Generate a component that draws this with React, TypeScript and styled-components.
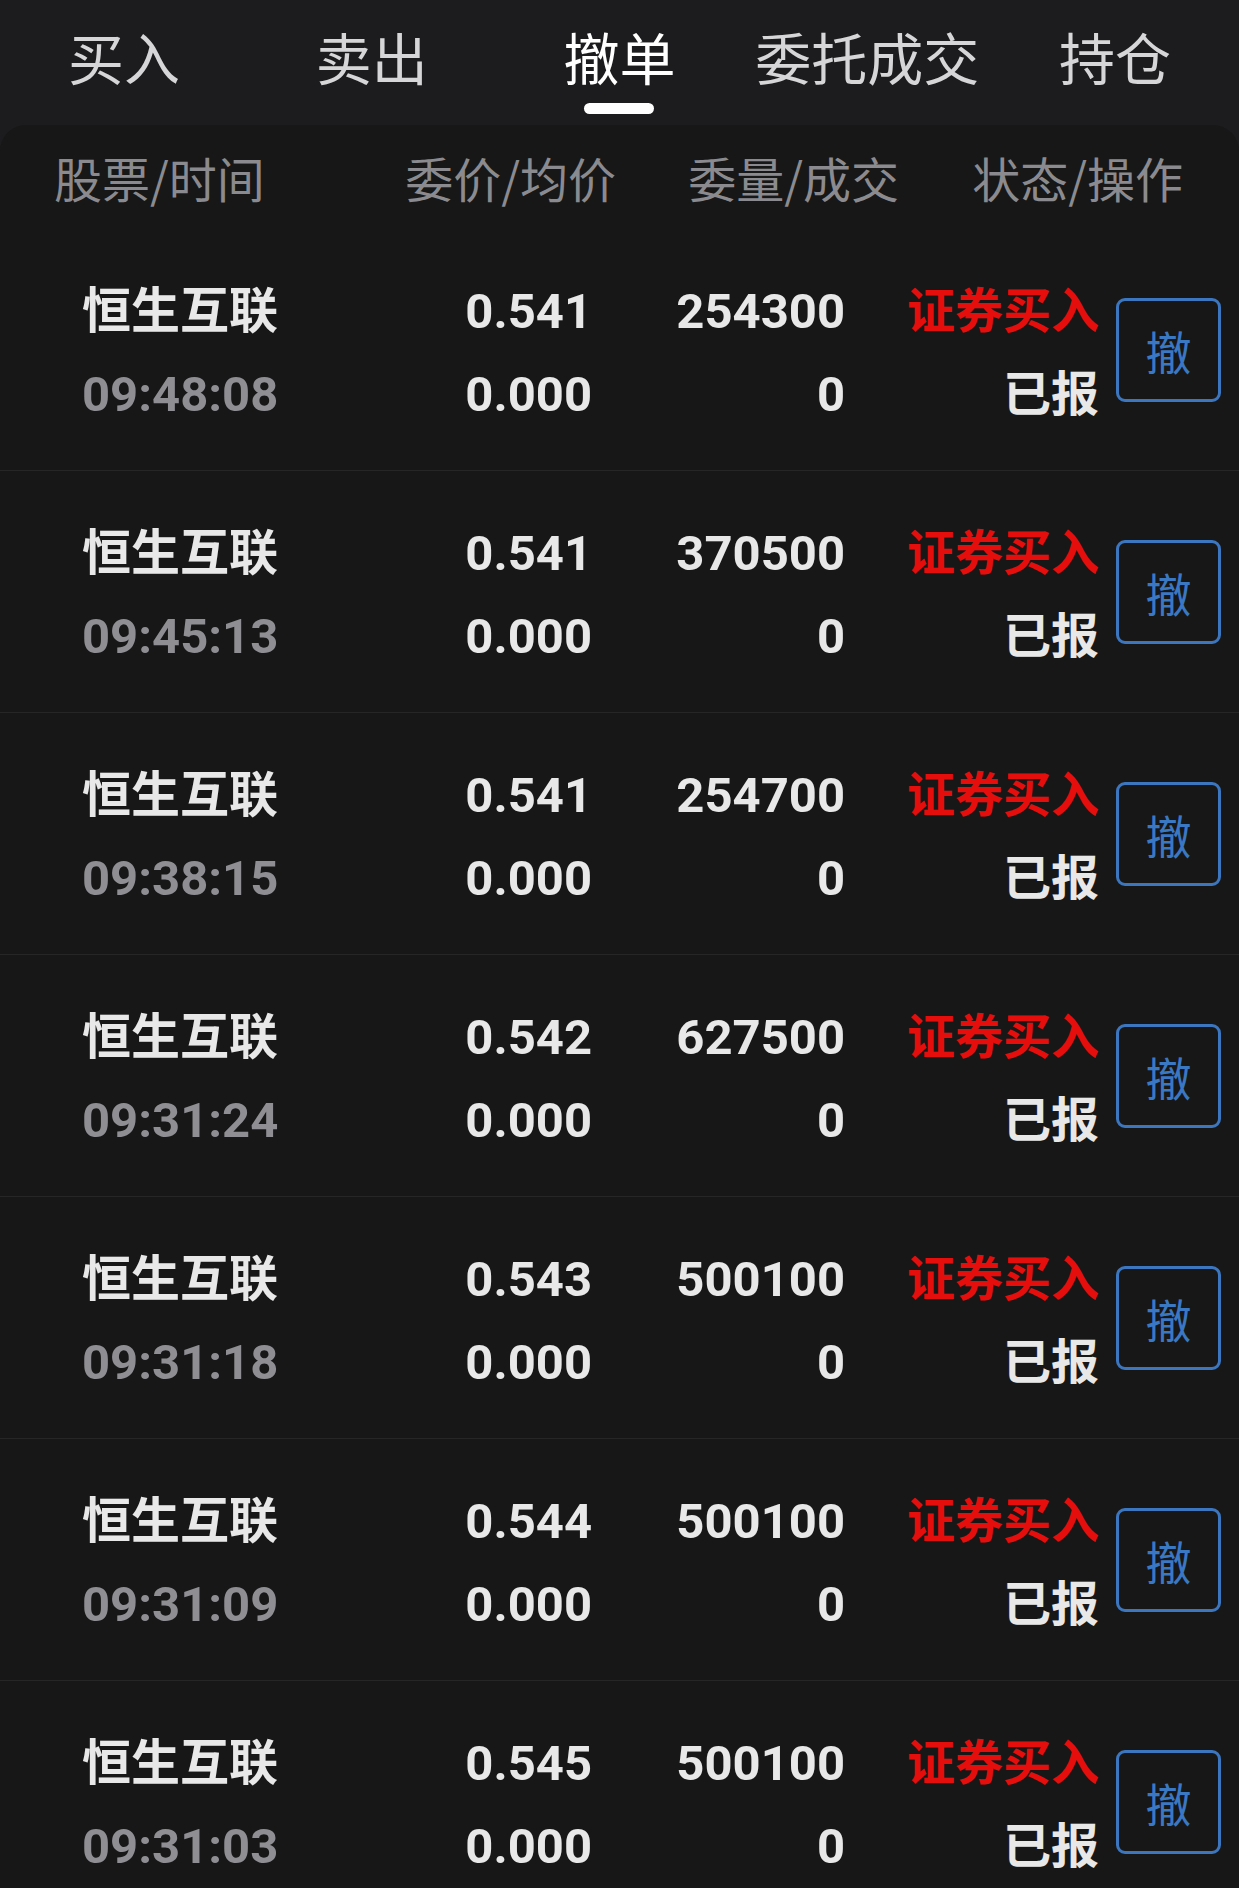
import React from "react";
import styled, { createGlobalStyle } from "styled-components";

const GlobalStyle = createGlobalStyle`
  html, body {
    margin: 0;
    padding: 0;
    background: #171717;
  }
  * { box-sizing: border-box; }
`;

const FONT = `Roboto, "Noto Sans CJK SC", "Noto Sans", sans-serif`;

const Page = styled.div`
  width: 1239px;
  height: 1888px;
  overflow: hidden;
  background: #1c1c1e;
  font-family: ${FONT};
  display: flex;
  flex-direction: column;
`;

const TabBar = styled.nav`
  height: 125px;
  flex: none;
  display: grid;
  grid-template-columns: repeat(5, 1fr);
`;

const Tab = styled.div`
  display: flex;
  flex-direction: column;
  align-items: center;
  padding-top: 26px;
`;

const TabLabel = styled.span<{ $active?: boolean }>`
  font-family: "Noto Sans CJK SC", sans-serif;
  font-size: 56px;
  line-height: 60px;
  font-weight: 400;
  color: ${(p) => (p.$active ? "#ffffff" : "#d6d6d8")};
  white-space: nowrap;
`;

const Indicator = styled.span<{ $active?: boolean }>`
  margin-top: 17px;
  width: 70px;
  height: 11px;
  border-radius: 6px;
  background: ${(p) => (p.$active ? "#ffffff" : "transparent")};
`;

const Panel = styled.section`
  flex: 1;
  background: #171717;
  border-radius: 26px 26px 0 0;
  display: flex;
  flex-direction: column;
`;

const HeaderRow = styled.div`
  height: 104px;
  flex: none;
  display: grid;
  grid-template-columns: 300px 262px 283px 284px;
  padding-left: 54px;
  align-items: center;
`;

const HeaderCell = styled.span<{ $right?: boolean }>`
  font-family: "Noto Sans CJK SC", sans-serif;
  font-size: 48px;
  line-height: 60px;
  color: #8b8b8f;
  text-align: ${(p) => (p.$right ? "right" : "left")};
  white-space: nowrap;
`;

const Row = styled.div`
  height: 242px;
  flex: none;
  display: grid;
  grid-template-columns: 300px 210px 253px 254px 122px;
  padding-left: 82px;
  align-items: center;
  border-bottom: 1px solid #262626;
`;

const Stack = styled.div<{ $right?: boolean }>`
  display: flex;
  flex-direction: column;
  align-items: ${(p) => (p.$right ? "flex-end" : "flex-start")};
  margin-top: 6px;
`;

const Line = styled.span<{ $tone?: "main" | "muted" | "red"; $size?: number }>`
  font-family: ${FONT};
  font-size: ${(p) => p.$size ?? 49}px;
  line-height: 83px;
  font-weight: 700;
  white-space: nowrap;
  color: ${(p) =>
    p.$tone === "muted" ? "#8e8e93" : p.$tone === "red" ? "#e60d0d" : "#e8e8e8"};
`;

const ActionCell = styled.div`
  display: flex;
  justify-content: flex-end;
`;

const CancelButton = styled.button`
  width: 105px;
  height: 104px;
  border: 3px solid #3b76bf;
  border-radius: 9px;
  background: transparent;
  color: #3b78c4;
  font-family: "Noto Sans CJK SC", sans-serif;
  font-size: 46px;
  line-height: 1;
  font-weight: 400;
  padding: 0;
  display: flex;
  align-items: center;
  justify-content: center;
  cursor: pointer;
`;

const tabs = ["买入", "卖出", "撤单", "委托成交", "持仓"];

const orders = [
  { time: "09:48:08", price: "0.541", qty: "254300" },
  { time: "09:45:13", price: "0.541", qty: "370500" },
  { time: "09:38:15", price: "0.541", qty: "254700" },
  { time: "09:31:24", price: "0.542", qty: "627500" },
  { time: "09:31:18", price: "0.543", qty: "500100" },
  { time: "09:31:09", price: "0.544", qty: "500100" },
  { time: "09:31:03", price: "0.545", qty: "500100" },
];

export default function App() {
  return (
    <>
      <GlobalStyle />
      <Page>
        <TabBar>
          {tabs.map((t) => (
            <Tab key={t}>
              <TabLabel $active={t === "撤单"}>{t}</TabLabel>
              <Indicator $active={t === "撤单"} />
            </Tab>
          ))}
        </TabBar>
        <Panel>
          <HeaderRow>
            <HeaderCell>股票/时间</HeaderCell>
            <HeaderCell $right>委价/均价</HeaderCell>
            <HeaderCell $right>委量/成交</HeaderCell>
            <HeaderCell $right>状态/操作</HeaderCell>
          </HeaderRow>
          {orders.map((o, i) => (
            <Row key={i}>
              <Stack>
                <Line>恒生互联</Line>
                <Line $tone="muted">{o.time}</Line>
              </Stack>
              <Stack $right>
                <Line>{o.price}</Line>
                <Line>0.000</Line>
              </Stack>
              <Stack $right>
                <Line>{o.qty}</Line>
                <Line>0</Line>
              </Stack>
              <Stack $right>
                <Line $tone="red" $size={48}>证券买入</Line>
                <Line $size={48}>已报</Line>
              </Stack>
              <ActionCell>
                <CancelButton>撤</CancelButton>
              </ActionCell>
            </Row>
          ))}
        </Panel>
      </Page>
    </>
  );
}
